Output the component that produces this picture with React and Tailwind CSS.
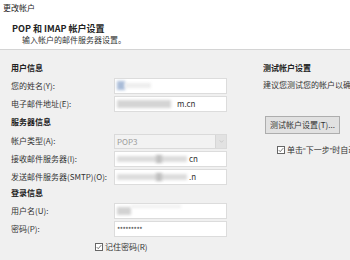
import React from "react";

const font = { fontFamily: '"Noto Sans CJK SC", "Noto Sans", sans-serif' };
const latin = { fontFamily: '"Liberation Sans", sans-serif' };

function Blur({ className }) {
  return <span className={"absolute blur-[1.5px] " + className} />;
}

function Field({ children }) {
  return (
    <div className="relative h-[16px] w-[113px] bg-white border border-[#dcdcdc] overflow-hidden text-[8px] leading-[14px] text-[#333]">
      {children}
    </div>
  );
}

function Row({ label, children, className = "" }) {
  return (
    <div className={"flex items-center " + className}>
      <div className="w-[103px] text-[8px] leading-[16px] text-[#333] whitespace-nowrap">{label}</div>
      {children}
    </div>
  );
}

function Check({ className = "" }) {
  return (
    <span className={"inline-flex items-center justify-center w-[8px] h-[8px] border border-[#666] bg-white shrink-0 " + className}>
      <svg viewBox="0 0 8 8" className="w-[6px] h-[6px]">
        <path d="M1 4.2 L3 6.2 L7 1.5" fill="none" stroke="#333" strokeWidth="0.9" />
      </svg>
    </span>
  );
}

export default function App() {
  return (
    <div style={font} className="w-[350px] h-[260px] overflow-hidden bg-[#f0f0f0] text-[#222]">
      {/* header */}
      <div className="h-[50px] bg-white border-b border-[#d4d4d4] relative">
        <div className="absolute left-[3px] top-[3px] text-[8px] leading-[10px]">更改帐户</div>
        <div className="absolute left-[12px] top-[23px] text-[9px] leading-[11px] font-bold">POP 和 IMAP 帐户设置</div>
        <div className="absolute left-[22px] top-[35px] text-[8px] leading-[10px] text-[#333]">输入帐户的邮件服务器设置。</div>
      </div>

      <div className="flex">
        {/* left column */}
        <div className="w-[263px] shrink-0 pl-[11px] flex flex-col">
          <div className="mt-[12px] h-[12px] text-[8px] leading-[12px] font-bold">用户信息</div>
          <Row label="您的姓名(Y):" className="mt-[4px]">
            <Field>
              <Blur className="left-[2px] top-[2px] w-[8px] h-[9px] bg-[#a9bcd8]" />
              <Blur className="left-[10px] top-[4px] w-[26px] h-[5px] bg-[#ededed]" />
            </Field>
          </Row>
          <Row label="电子邮件地址(E):" className="mt-[2px]">
            <Field>
              <Blur className="left-[2px] top-[3px] w-[54px] h-[8px] bg-[#d4d4d4]" />
              <span className="absolute left-[62px] top-0">m.cn</span>
            </Field>
          </Row>

          <div className="mt-[4px] h-[12px] text-[8px] leading-[12px] font-bold">服务器信息</div>
          <Row label="帐户类型(A):" className="mt-[5px]">
            <div className="relative h-[15px] w-[113px] bg-[#f2f2f2] border border-[#dadada] text-[8px] leading-[13px] text-[#9a9a9a] pl-[2px]">
              POP3
              <span className="absolute right-0 top-0 h-[13px] w-[11px] bg-[#e2e2e2] border-l border-[#d6d6d6] flex items-center justify-center">
                <svg viewBox="0 0 6 4" className="w-[5px] h-[3px]">
                  <path d="M0.5 0.5 L3 3 L5.5 0.5" fill="none" stroke="#bbb" strokeWidth="0.8" />
                </svg>
              </span>
            </div>
          </Row>
          <Row label="接收邮件服务器(I):" className="mt-[2px]">
            <Field>
              <Blur className="left-[2px] top-[4px] w-[70px] h-[6px] bg-[#dcdcdc]" />
              <Blur className="left-[41px] top-[3px] w-[6px] h-[8px] bg-[#c0c0c0]" />
              <span className="absolute left-[74px] top-0">cn</span>
            </Field>
          </Row>
          <Row label="发送邮件服务器(SMTP)(O):" className="mt-[2px]">
            <Field>
              <Blur className="left-[2px] top-[4px] w-[70px] h-[6px] bg-[#dcdcdc]" />
              <Blur className="left-[41px] top-[3px] w-[6px] h-[8px] bg-[#c0c0c0]" />
              <span className="absolute left-[74px] top-0">.n</span>
            </Field>
          </Row>

          <div className="mt-[2px] h-[12px] text-[8px] leading-[12px] font-bold">登录信息</div>
          <Row label="用户名(U):" className="mt-[4px]">
            <Field>
              <Blur className="left-[2px] top-[3px] w-[14px] h-[8px] bg-[#d2d2d2]" />
              <Blur className="left-[16px] top-[1px] w-[50px] h-[3px] bg-[#eeeeee]" />
            </Field>
          </Row>
          <Row label="密码(P):" className="mt-[2px]">
            <Field>
              <span className="absolute left-[2px] top-0 text-[7px] leading-[14px] tracking-[-0.5px]">*********</span>
            </Field>
          </Row>
          <div className="mt-[5px] ml-[84px] flex items-center gap-[2px] h-[10px]">
            <Check />
            <span className="text-[8px] leading-[10px] text-[#333]">记住密码(R)</span>
          </div>
        </div>

        {/* right column */}
        <div className="flex-1 flex flex-col overflow-hidden whitespace-nowrap">
          <div className="mt-[12px] h-[12px] text-[8px] leading-[12px] font-bold">测试帐户设置</div>
          <div className="mt-[5px] h-[12px] text-[8px] leading-[12px] text-[#333]">建议您测试您的帐户以确保条目正确无误。</div>
          <button className="mt-[25px] ml-[2px] w-[75px] h-[18px] bg-[#e1e1e1] border border-[#adadad] text-[8px] leading-[16px] text-[#333]">
            测试帐户设置(T)...
          </button>
          <div className="mt-[11px] ml-[14px] flex items-center gap-[2px] h-[10px]">
            <Check />
            <span className="text-[8px] leading-[10px] text-[#333]">
              单击<span style={latin}>“</span>下一步<span style={latin}>”</span>时自动测试帐户设置
            </span>
          </div>
        </div>
      </div>
    </div>
  );
}
